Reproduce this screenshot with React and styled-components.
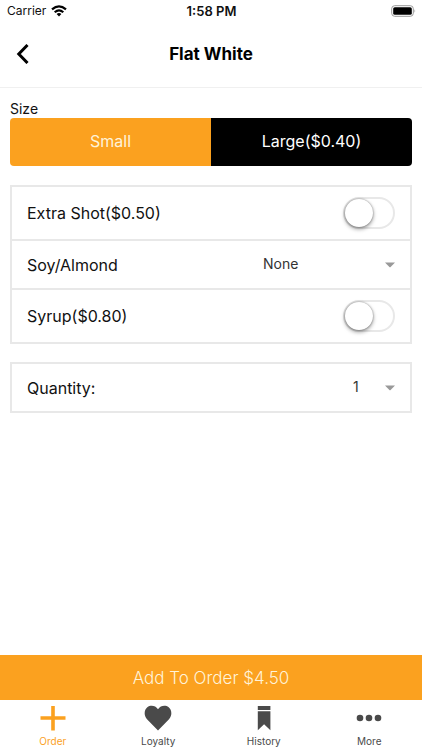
import React, { useState } from "react";
import styled, { createGlobalStyle } from "styled-components";

const ORANGE = "#fba11f";
const LINE = "#e8e8e8";

const GlobalStyle = createGlobalStyle`
  *, *::before, *::after { box-sizing: border-box; }
  body { margin: 0; background: #fff; color: #111; font-family: Inter, "Liberation Sans", sans-serif; }
  button, select, input { font-family: inherit; }
`;

const Screen = styled.div`
  display: flex;
  flex-direction: column;
  min-height: 100vh;
`;

const StatusBar = styled.div`
  display: grid;
  grid-template-columns: 1fr auto 1fr;
  align-items: center;
  height: 21px;
  padding: 0 6px 0 7px;
  font-size: 12px;
`;

const Carrier = styled.span`
  display: flex;
  align-items: center;
  gap: 5px;
`;

const Clock = styled.time`
  font-size: 13px;
  font-weight: 600;
`;

const Battery = styled.svg`
  justify-self: end;
`;

const Header = styled.header`
  display: grid;
  grid-template-columns: 48px 1fr 48px;
  align-items: center;
  height: 67px;
  border-bottom: 1px solid #f0f0f0;
`;

const BackButton = styled.button`
  display: flex;
  align-items: center;
  height: 48px;
  padding: 0 0 0 16px;
  border: 0;
  background: none;
  color: #000;
`;

const Title = styled.h1`
  margin: 0;
  font-size: 17px;
  font-weight: 700;
  text-align: center;
  color: #000;
`;

const Main = styled.main`
  flex: 1;
  padding: 11px 10px;
`;

const SizeField = styled.fieldset`
  margin: 0 0 19px;
  padding: 0;
  border: 0;
`;

const Legend = styled.legend`
  padding: 0;
  font-size: 14px;
  line-height: 19px;
`;

const Segments = styled.div`
  display: flex;
  height: 48px;
  overflow: hidden;
  border-radius: 4px;
`;

const Segment = styled.button`
  flex: 1;
  padding: 0 0 2px;
  border: 0;
  background: ${(p) => (p.$active ? ORANGE : "#000")};
  color: ${(p) => (p.$active ? "#fff3d9" : "#fff")};
  font-size: 16px;
`;

const Group = styled.section`
  margin-bottom: 18px;
  border: 2px solid ${LINE};
`;

const Row = styled.div`
  box-sizing: content-box;
  display: flex;
  align-items: center;
  justify-content: space-between;
  height: ${(p) => (p.$tall ? 52 : 47)}px;
  padding: 0 15px;
  & + & { border-top: 2px solid ${LINE}; }
`;

const Label = styled.label`
  font-size: 16px;
`;

const Switch = styled.input`
  appearance: none;
  width: 52px;
  height: 32px;
  margin: 0;
  border: 2px solid ${LINE};
  border-radius: 16px;
  background: #fff;

  &::before {
    content: "";
    display: block;
    width: 28px;
    height: 28px;
    border-radius: 50%;
    background: #fff;
    box-shadow: 0 0 2px rgba(0, 0, 0, 0.4), 0 2px 4px rgba(0, 0, 0, 0.4);
  }

  &:checked { background: ${ORANGE}; border-color: ${ORANGE}; }
  &:checked::before { margin-left: 20px; }
`;

const Picker = styled.div`
  display: grid;
  align-items: center;
  width: ${(p) => (p.$wide ? 132 : 42)}px;
  & > * { grid-area: 1 / 1; }
`;

const Select = styled.select`
  appearance: none;
  width: 100%;
  height: 40px;
  padding: 0 20px 2px 0;
  border: 0;
  background: none;
  color: #333;
  font-size: 14px;
`;

const Caret = styled.svg`
  justify-self: end;
  pointer-events: none;
`;

const AddButton = styled.button`
  height: 45px;
  padding: 0;
  border: 0;
  background: ${ORANGE};
  color: #fff3d9;
  font-size: 17px;
  font-weight: 300;
`;

const Tabs = styled.nav`
  display: flex;
  height: 50px;
`;

const Tab = styled.a`
  display: flex;
  flex: 1;
  flex-direction: column;
  align-items: center;
  gap: 2px;
  padding-top: 4px;
  color: ${(p) => (p.$active ? ORANGE : "#4a4a4a")};
  font-size: 10px;
  line-height: 14px;
  text-decoration: none;
`;

function Toggle({ id, label }) {
  return (
    <Row $tall>
      <Label htmlFor={id}>{label}</Label>
      <Switch id={id} type="checkbox" role="switch" />
    </Row>
  );
}

function Choice({ id, label, options, wide }) {
  return (
    <Row>
      <Label htmlFor={id}>{label}</Label>
      <Picker $wide={wide}>
        <Select id={id}>
          {options.map((o) => (
            <option key={o}>{o}</option>
          ))}
        </Select>
        <Caret width="10" height="6" viewBox="0 0 10 6" aria-hidden="true">
          <path d="M0 0.5H10L5.6 5Q5 5.6 4.4 5Z" fill="#999" />
        </Caret>
      </Picker>
    </Row>
  );
}

const TABS = [
  { name: "Order", icon: <path d="M12.2 2h3.6v10.2H26.5v3.6H15.8V26.5h-3.6V15.8H1.5v-3.6h10.7z" /> },
  {
    name: "Loyalty",
    icon: <path d="M14 26.5 3 15.2C-.5 11.5 .2 5.700 3.300 3.300 6.700 .7 11.500 1.600 14 5.200 16.500 1.600 21.300 .7 24.700 3.300 27.800 5.700 28.500 11.500 25 15.200Z" />,
  },
  { name: "History", icon: <path d="M7.800 2h12.600v4H7.800zM7.800 7.300h12.600v19L14.100 20.300 7.800 26.300z" /> },
  {
    name: "More",
    icon: (
      <>
        <circle cx="5" cy="14" r="3.300" />
        <circle cx="14" cy="14" r="3.300" />
        <circle cx="23" cy="14" r="3.300" />
      </>
    ),
  },
];

export default function App() {
  const [size, setSize] = useState("Small");
  return (
    <Screen>
      <GlobalStyle />
      <StatusBar>
        <Carrier>
          Carrier
          <svg width="16" height="12" viewBox="0 0 16 12" fill="none" stroke="#000" strokeWidth="2.200" aria-hidden="true">
            <path d="M1 4.400Q8-1.800 15 4.400M3.700 7.200Q8 3.400 12.300 7.200" />
            <path d="M8 11.500 5.600 9Q8 7 10.400 9Z" fill="#000" stroke="none" />
          </svg>
        </Carrier>
        <Clock>1:58 PM</Clock>
        <Battery width="25" height="12" viewBox="0 0 25 12" aria-hidden="true">
          <rect x="0.700" y="0.700" width="21.600" height="10.600" rx="3" fill="none" stroke="#999" />
          <rect x="2.200" y="2.200" width="18.600" height="7.600" rx="1.600" />
          <path d="M23.500 4.200Q25 6 23.500 7.800Z" fill="#999" />
        </Battery>
      </StatusBar>
      <Header>
        <BackButton aria-label="Back">
          <svg width="14" height="20" viewBox="0 0 14 20" fill="none" stroke="currentColor" strokeWidth="3" aria-hidden="true">
            <path d="M11.500 1 2.800 10 11.500 19" />
          </svg>
        </BackButton>
        <Title>Flat White</Title>
      </Header>
      <Main>
        <SizeField>
          <Legend>Size</Legend>
          <Segments>
            {[["Small", "Small"], ["Large", "Large($0.40)"]].map(([key, text]) => (
              <Segment key={key} $active={size === key} aria-pressed={size === key} onClick={() => setSize(key)}>
                {text}
              </Segment>
            ))}
          </Segments>
        </SizeField>
        <Group>
          <Toggle id="shot" label="Extra Shot($0.50)" />
          <Choice id="milk" label="Soy/Almond" options={["None", "Soy", "Almond"]} wide />
          <Toggle id="syrup" label="Syrup($0.80)" />
        </Group>
        <Group>
          <Choice id="quantity" label="Quantity:" options={["1", "2", "3", "4", "5"]} />
        </Group>
      </Main>
      <AddButton>Add To Order $4.50</AddButton>
      <Tabs>
        {TABS.map((t, i) => (
          <Tab key={t.name} href={"#" + t.name.toLowerCase()} $active={i === 0}>
            <svg width="28" height="28" viewBox="0 0 28 28" fill="currentColor" aria-hidden="true">
              {t.icon}
            </svg>
            {t.name}
          </Tab>
        ))}
      </Tabs>
    </Screen>
  );
}
